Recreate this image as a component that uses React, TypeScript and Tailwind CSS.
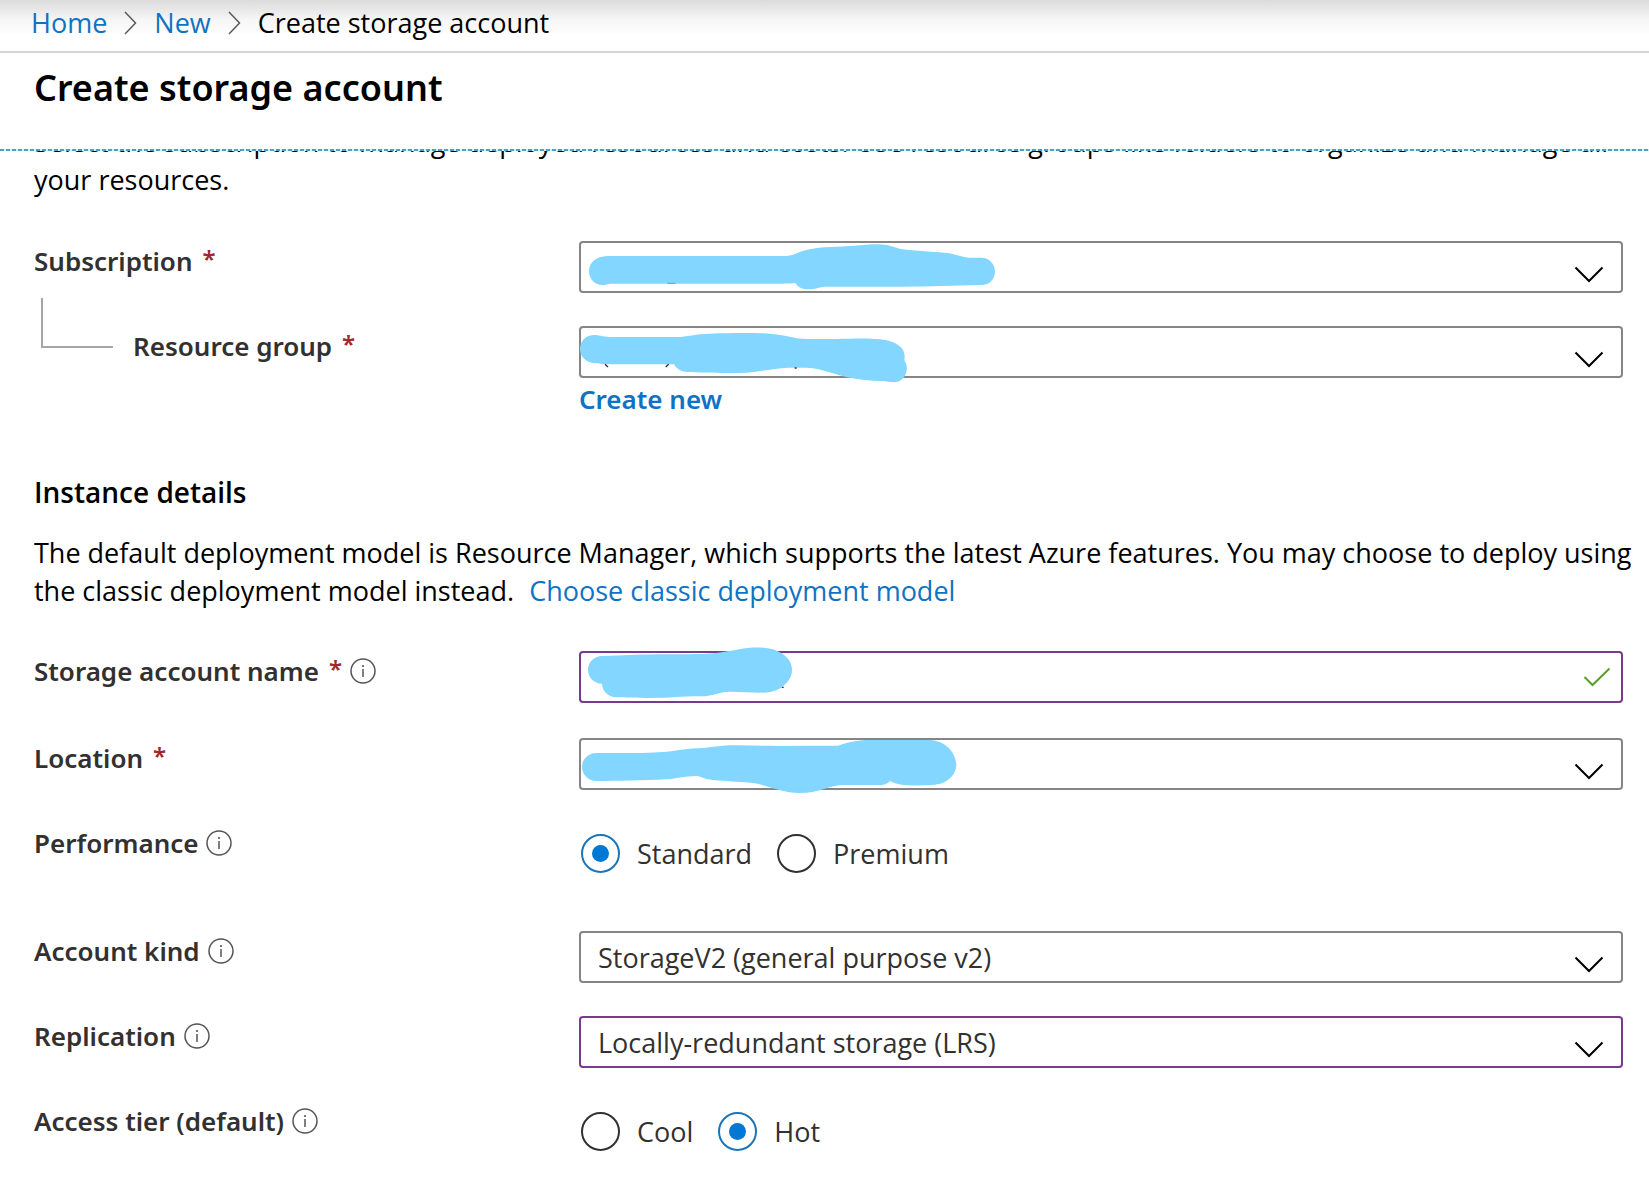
import type { ReactNode } from "react";

const redactionColor = "#82d6ff";

function ChevronRight() {
  return (
    <svg aria-hidden="true" width="13" height="24" viewBox="0 0 13 24" fill="none" stroke="#5a5a5a" strokeWidth="1.5">
      <path d="M1 1L11.5 12L1 23" />
    </svg>
  );
}

function InfoButton({ about }: { about: string }) {
  return (
    <button type="button" aria-label={`More about ${about}`} className="ml-2 shrink-0">
      <svg width="26" height="26" viewBox="0 0 26 26" fill="none" stroke="#555555" className="block">
        <circle cx="13" cy="13" r="12" strokeWidth="1.5" />
        <path d="M13 11V19" strokeWidth="1.5" />
        <circle cx="13" cy="8" r="1.1" fill="#555555" stroke="none" />
      </svg>
    </button>
  );
}

function Required() {
  return (
    <span aria-hidden="true" className="ml-2.5 self-start text-2xl leading-[34px] text-[#a4262c]">
      *
    </span>
  );
}

function LabelText({ id, htmlFor, text, required, info }: { id?: string; htmlFor?: string; text: string; required?: boolean; info?: boolean }) {
  return (
    <div className="flex items-center pt-px font-['Noto_Sans',sans-serif] text-[26px] font-semibold leading-[38px] text-[#323130]">
      {htmlFor ? <label htmlFor={htmlFor}>{text}</label> : <span id={id}>{text}</span>}
      {required && <Required />}
      {info && <InfoButton about={text} />}
    </div>
  );
}

function Row({ label, children }: { label: ReactNode; children: ReactNode }) {
  return (
    <div className="grid grid-cols-[545px_minmax(0,1fr)] items-start">
      {label}
      {children}
    </div>
  );
}

function Redaction({ viewBox, children }: { viewBox: string; children: ReactNode }) {
  return (
    <svg
      aria-hidden="true"
      width="450"
      height="52"
      viewBox={viewBox}
      fill={redactionColor}
      className="pointer-events-none absolute left-0 top-0 overflow-visible"
    >
      {children}
    </svg>
  );
}

function Select({ id, value, edited, redaction }: { id: string; value: string; edited?: boolean; redaction?: ReactNode }) {
  return (
    <div className="relative">
      <select
        id={id}
        className={
          "block h-[52px] w-full appearance-none rounded-[4px] border-2 bg-white pl-[17px] pr-14 pt-0.5 text-[27px] leading-[38px] text-[#323130] " +
          (edited ? "border-[#773a8c]" : "border-[#868484]")
        }
      >
        <option>{value}</option>
      </select>
      <svg
        aria-hidden="true"
        width="30"
        height="18"
        viewBox="0 0 30 18"
        fill="none"
        stroke="#000000"
        strokeWidth="2"
        className="pointer-events-none absolute right-[19px] top-[25px]"
      >
        <path d="M1.5 1.5L15 15L28.5 1.5" />
      </svg>
      {redaction}
    </div>
  );
}

function Radio({ name, label, checked }: { name: string; label: string; checked?: boolean }) {
  return (
    <label className="flex items-end gap-[17px]">
      <input
        type="radio"
        name={name}
        defaultChecked={checked}
        className="flex size-[39px] appearance-none items-center justify-center rounded-full border-2 border-[#323130] bg-white before:size-[17px] before:rounded-full checked:border-[#1b75bb] checked:before:bg-[#0078d4]"
      />
      <span>{label}</span>
    </label>
  );
}

function RadioGroup({ labelledBy, children }: { labelledBy: string; children: ReactNode }) {
  return (
    <div role="radiogroup" aria-labelledby={labelledBy} className="flex gap-[25px] pb-[25px] pl-0.5 pt-[11px] text-[#323130]">
      {children}
    </div>
  );
}

export default function App() {
  return (
    <div className="min-h-screen bg-white font-['Open_Sans',sans-serif] text-[27px] leading-[38px] text-black">
      <nav
        aria-label="Breadcrumb"
        className="border-b-2 border-[#d4d4d4] bg-[linear-gradient(#dcdcdc_0px,#e6e6e6_8px,#f6f6f6_20px,#ffffff_36px)] pb-[9px] pl-[31px] pt-1"
      >
        <ol className="flex items-center gap-[17px]">
          <li>
            <a href="#home" className="text-[#1073c2]">Home</a>
          </li>
          <li><ChevronRight /></li>
          <li>
            <a href="#new" className="text-[#1073c2]">New</a>
          </li>
          <li><ChevronRight /></li>
          <li aria-current="page">Create storage account</li>
        </ol>
      </nav>

      <header>
        <h1 className="pb-9 pl-[34px] pt-2.5 font-['Noto_Sans',sans-serif] text-[36px] font-semibold leading-[50px]">
          Create storage account
        </h1>
        <div className="h-0.5 bg-[repeating-linear-gradient(90deg,#4aa3ba_0px_4px,#cdf6fb_4px_6px)]" />
      </header>

      <main className="overflow-hidden pl-[34px]">
        <p className="-mt-7 pr-3">
          Select the subscription to manage deployed resources and costs. Use resource groups like folders to organize and manage all
          your resources.
        </p>

        <section aria-label="Project details" className="flex flex-col gap-[33px] pr-[26px] pt-[42px]">
          <Row label={<LabelText htmlFor="subscription" text="Subscription" required />}>
            <Select
              id="subscription"
              value=""
              redaction={
                <Redaction viewBox="27 33 1350 156">
                  <path d="M98 165C74 165 57 147 57 123C57 98 78 79 112 78H640C658 78 666 76 682 69C712 56 748 51 800 50C850 49 890 43 925 43C955 43 972 52 992 57C1040 63 1090 65 1130 69C1155 72 1172 80 1196 83H1234C1258 83 1275 102 1275 125C1275 148 1258 165 1234 165C1150 167 1080 170 1000 170H765C748 171 736 178 714 178C694 178 682 170 676 159C660 161 640 161 620 161H122C113 161 106 165 98 165Z" />
                  <path d="M292 160H316" stroke="#4d7f96" strokeWidth="2" />
                </Redaction>
              }
            />
          </Row>
          <Row
            label={
              <div className="flex items-start">
                <div className="-mt-7 ml-[7px] h-[50px] w-[72px] border-b-2 border-l-2 border-[#a6a6a6]" />
                <div className="ml-5">
                  <LabelText htmlFor="resource-group" text="Resource group" required />
                </div>
              </div>
            }
          >
            <div>
              <Select
                id="resource-group"
                value=""
                redaction={
                  <Redaction viewBox="27 288 1350 156">
                    <path d="M70 315C88 315 94 320 120 321H320C350 321 380 311 420 311C480 309 530 309 580 310C640 312 668 327 712 327H800C850 325 900 324 930 328C975 333 1003 350 1004 378C1004 386 1003 390 1004 394C1012 404 1012 418 1008 430C1002 448 988 457 970 457C958 457 950 453 935 453C900 452 870 449 838 443C790 433 750 413 706 413H655C610 415 580 424 530 428C470 430 400 428 350 426C328 424 316 412 312 402C300 404 280 403 260 403H100C94 402 88 400 76 400C48 398 30 380 30 357C31 334 46 316 70 315Z" />
                    <path d="M105 403L114 411M296 403L287 411M674 414H680" stroke="#323130" strokeWidth="4" />
                  </Redaction>
                }
              />
              <a
                href="#create-new"
                className="mt-0.5 block w-fit font-['Noto_Sans',sans-serif] text-[26px] font-semibold leading-[38px] text-[#1073c2]"
              >
                Create new
              </a>
            </div>
          </Row>
        </section>

        <h2 className="pt-[55px] text-[28px] font-semibold">Instance details</h2>
        <p className="pr-3 pt-[23px]">
          The default deployment model is Resource Manager, which supports the latest Azure features. You may choose to deploy using the
          classic deployment model instead.{" "}
          <a href="#classic" className="ml-2 text-[#1073c2]">Choose classic deployment model</a>
        </p>

        <section aria-label="Instance details" className="flex flex-col gap-[33px] pr-[26px] pt-[41px]">
          <Row label={<LabelText htmlFor="account-name" text="Storage account name" required info />}>
            <div className="relative pb-0.5">
              <input
                id="account-name"
                type="text"
                className="block h-[52px] w-full rounded-[4px] border-2 border-[#773a8c] bg-white pl-[17px] pr-14 text-[#323130]"
              />
              <svg
                aria-hidden="true"
                width="28"
                height="20"
                viewBox="0 0 28 20"
                fill="none"
                stroke="#57a02b"
                strokeWidth="2"
                className="pointer-events-none absolute right-3 top-4"
              >
                <path d="M1.5 10L9.5 18L26.5 1.5" />
              </svg>
              <Redaction viewBox="27 33 1350 156">
                <path d="M635 142H641" stroke="#323130" strokeWidth="4" />
                <path d="M96 48C160 47 200 44 260 43C320 42 360 43 410 41C470 37 500 27 540 23C580 20 612 25 635 40C656 54 666 70 666 90C666 112 652 130 632 144C612 156 592 158 570 158C540 157 510 155 480 155C445 156 430 168 395 169C330 169 300 174 240 174C200 174 170 173 136 172C112 169 97 152 96 131C72 130 54 113 54 89C55 66 72 49 96 48Z" />
              </Redaction>
            </div>
          </Row>
          <Row label={<LabelText htmlFor="location" text="Location" required />}>
            <Select
              id="location"
              value=""
              redaction={
                <Redaction viewBox="27 294 1350 156">
                  <path d="M78 339C140 339 220 340 290 335C330 331 350 325 400 324C440 320 460 315 500 316C600 319 700 317 804 317C840 304 870 300 900 300H1080C1125 303 1158 335 1159 376C1158 405 1130 432 1095 434C1060 437 1020 437 995 434C980 432 970 428 960 423C950 432 944 435 930 435H830C800 434 785 440 765 446C740 454 715 459 688 459C640 459 600 439 555 430C500 424 450 424 415 418C400 415 394 410 382 408C340 409 320 416 290 418C220 422 140 423 76 423C52 420 36 402 36 381C36 358 54 340 78 339Z" />
                </Redaction>
              }
            />
          </Row>
          <Row label={<LabelText id="performance" text="Performance" info />}>
            <RadioGroup labelledBy="performance">
              <Radio name="performance" label="Standard" checked />
              <Radio name="performance" label="Premium" />
            </RadioGroup>
          </Row>
          <Row label={<LabelText htmlFor="account-kind" text="Account kind" info />}>
            <Select id="account-kind" value="StorageV2 (general purpose v2)" />
          </Row>
          <Row label={<LabelText htmlFor="replication" text="Replication" info />}>
            <Select id="replication" value="Locally-redundant storage (LRS)" edited />
          </Row>
          <Row label={<LabelText id="access-tier" text="Access tier (default)" info />}>
            <RadioGroup labelledBy="access-tier">
              <Radio name="access-tier" label="Cool" />
              <Radio name="access-tier" label="Hot" checked />
            </RadioGroup>
          </Row>
        </section>
      </main>
    </div>
  );
}
